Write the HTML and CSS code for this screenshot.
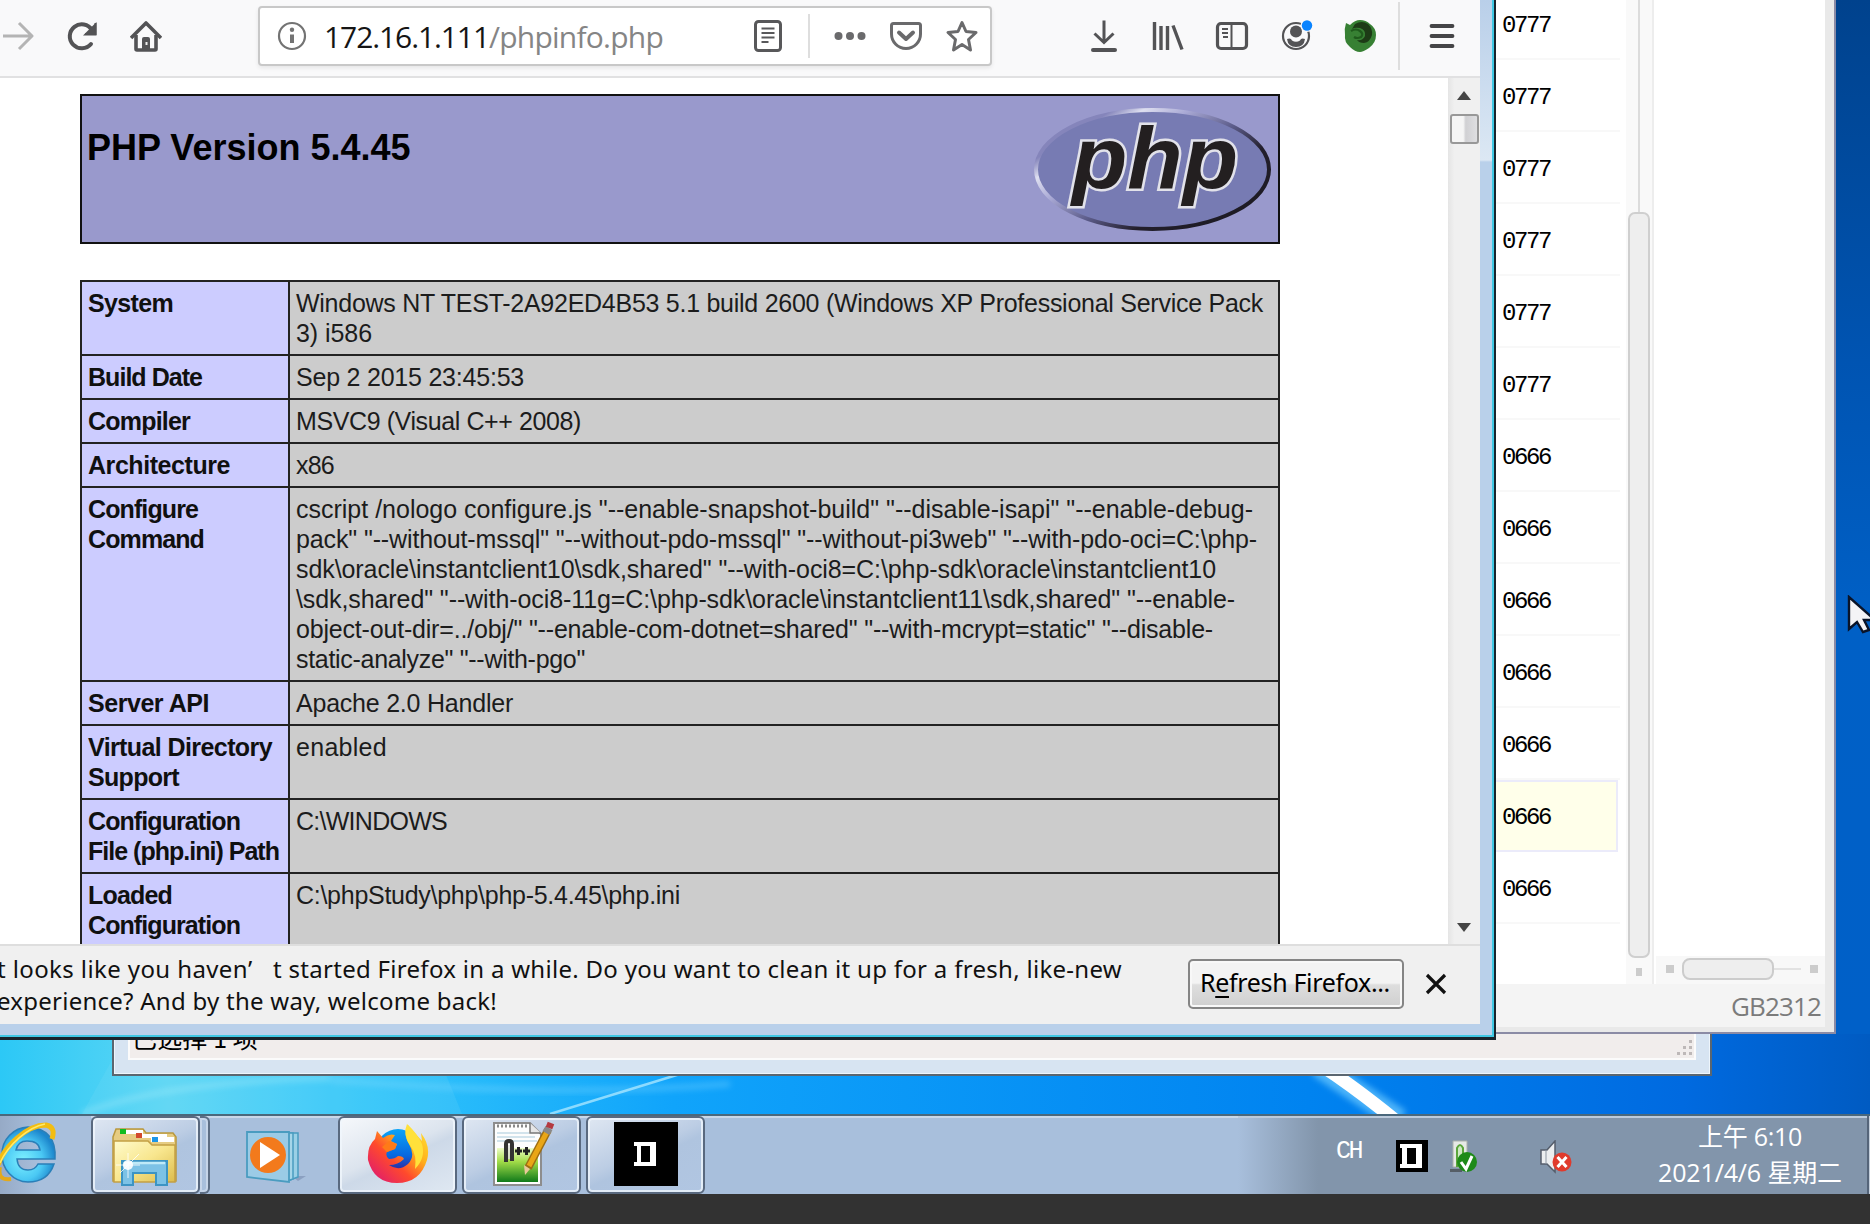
FILE: index.html
```html
<!DOCTYPE html>
<html lang="en">
<head>
<meta charset="utf-8">
<title>phpinfo()</title>
<link rel="stylesheet" href="styles.css">
</head>
<body>
<div class="desktop">
  <svg class="wallpaper" viewBox="0 0 1870 1114" preserveAspectRatio="none">
    <defs>
      <linearGradient id="sky" x1="0" x2="1" y1="0" y2="0"><stop offset="0" stop-color="#2cc8f6"/><stop offset=".09" stop-color="#5cd6f4"/><stop offset=".2" stop-color="#30c4fa"/><stop offset=".36" stop-color="#10a4fb"/><stop offset=".7" stop-color="#0083f0"/><stop offset=".9" stop-color="#006ae0"/><stop offset="1" stop-color="#005bc2"/></linearGradient>
      <linearGradient id="side" x1="0" x2="0" y1="0" y2="1"><stop offset="0" stop-color="#00428d"/><stop offset=".35" stop-color="#0054b2"/><stop offset=".6" stop-color="#0060c6"/><stop offset="1" stop-color="#0060c8"/></linearGradient>
      <filter id="soft" x="-20%" y="-50%" width="140%" height="200%"><feGaussianBlur stdDeviation="3"/></filter>
    </defs>
    <rect width="1870" height="1114" fill="url(#sky)"/>
    <rect x="1832" width="38" height="1034" fill="url(#side)"/>
    <path d="M82 1114Q160 1082 330 1078" stroke="#b4f0fa" stroke-width="4" fill="none" opacity=".5" filter="url(#soft)"/>
    <path d="M82 1114L112 1060H440L462 1114Z" fill="#8fe4fa" opacity=".14"/>
    <path d="M330 1080Q560 1098 730 1084" stroke="#8adcff" stroke-width="5" fill="none" opacity=".4" filter="url(#soft)"/>
    <path d="M550 1114L680 1074" stroke="#a8e6ff" stroke-width="2.5" opacity=".8"/>
    <path d="M1318 1066L1400 1120" stroke="#6ecbff" stroke-width="22" filter="url(#soft)" opacity=".7"/>
    <path d="M1322 1066Q1356 1088 1400 1124" stroke="#fff" stroke-width="13" fill="none"/>
  </svg>

  <section class="explorer">
    <div class="explorer-status"><span data-w="126">已选择 1 项</span>
      <svg width="16" height="16" viewBox="0 0 16 16" fill="#bdb8b8"><path d="M12 0h3v3h-3zM6 6h3v3H6zM12 6h3v3h-3zM0 12h3v3H0zM6 12h3v3H6zM12 12h3v3h-3z"/></svg>
    </div>
  </section>

  <section class="manager">
    <div class="manager-body">
      <div class="list">
        <div class="entry">0777</div><div class="entry">0777</div><div class="entry">0777</div><div class="entry">0777</div><div class="entry">0777</div><div class="entry">0777</div>
        <div class="entry">0666</div><div class="entry">0666</div><div class="entry">0666</div><div class="entry">0666</div><div class="entry">0666</div>
        <div class="entry selected">0666</div><div class="entry">0666</div>
      </div>
      <div class="vscroll"><div class="vline"></div><div class="vthumb"></div><i class="nub"></i></div>
      <div class="pane">
        <div class="hscroll"><i class="nub"></i><div class="hthumb"></div><div class="hline"></div><i class="nub"></i></div>
      </div>
    </div>
    <div class="manager-status"><span data-w="90">GB2312</span></div>
  </section>

  <section class="firefox">
    <div class="client">
      <nav class="toolbar">
        <span class="tool"><svg width="32" height="32" viewBox="0 0 32 32" fill="none" stroke="#b4b4b4" stroke-width="3"><path d="M1 16h29M17 3l13 13-13 13" stroke-linejoin="round"/></svg></span>
        <span class="tool"><svg width="32" height="32" viewBox="0 0 32 32" fill="none" stroke="#535355" stroke-width="4"><path d="M25 24A12 12 0 1 1 26 10" stroke-linecap="round"/><path d="M30.500 2v13.500H17z" fill="#535355" stroke="none"/><path d="M19 14h10.500V3" stroke-width="2"/></svg></span>
        <span class="tool"><svg width="32" height="32" viewBox="0 0 32 32" fill="none" stroke="#535355" stroke-width="3.600"><path d="M1 18L16 3l15 15" stroke-linejoin="round"/><path d="M6 15v14a1 1 0 0 0 1 1h18a1 1 0 0 0 1-1V15"/><path d="M12 30V19q0-2 2-2h4q2 0 2 2v11z" fill="#535355" stroke="none"/><path d="M16.500 22v3" stroke="#eee" stroke-width="2"/></svg></span>
        <div class="urlbar">
          <svg class="info" width="30" height="30" viewBox="0 0 30 30" fill="none" stroke="#737373"><circle cx="15" cy="15" r="13" stroke-width="2.200"/><path d="M15 13.500V22" stroke-width="4"/><circle cx="15" cy="8.800" r="2.200" fill="#737373" stroke="none"/></svg>
          <span class="url"><span class="host" data-w="165">172.16.1.111</span><span class="path" data-w="174">/phpinfo.php</span></span>
          <svg class="reader" width="32" height="34" viewBox="0 0 32 34" fill="none" stroke="#58585a" stroke-width="3"><rect x="3.500" y="2.500" width="25" height="29" rx="3"/><path d="M9.500 9.500h13M9.500 14h13M9.500 18.500h13M9.500 23h7" stroke-width="2"/></svg>
          <i class="rule short"></i>
          <span class="action"><svg width="36" height="32" viewBox="0 0 36 32" fill="#6a6a6c"><circle cx="6.500" cy="16" r="4"/><circle cx="18" cy="16" r="4"/><circle cx="29.500" cy="16" r="4"/></svg></span>
          <span class="action"><svg width="34" height="32" viewBox="0 0 34 32" fill="none" stroke="#6a6a6c" stroke-width="3"><path d="M4.500 3.500h25q2 0 2 2V14a14.500 14.500 0 0 1-29 0V5.500q0-2 2-2z"/><path d="M10 12.500l7 6.500 7-6.500" stroke-width="4" stroke-linecap="round" stroke-linejoin="round"/></svg></span>
          <span class="action"><svg width="34" height="34" viewBox="0 0 34 34" fill="none" stroke="#6a6a6c" stroke-width="3" stroke-linejoin="round"><path d="M17 3.500l4 9 10 1-7.500 7L25.500 31 17 25.500 8.500 31l2-10.500L3 13.500l10-1z"/></svg></span>
        </div>
        <span class="tool first"><svg width="32" height="34" viewBox="0 0 32 34" fill="none" stroke="#535355" stroke-width="3"><path d="M16 1.500v22M6.500 14.500l9.500 9 9.500-9"/><path d="M5 31h22" stroke-width="4" stroke-linecap="round"/></svg></span>
        <span class="tool"><svg width="34" height="30" viewBox="0 0 34 30" fill="none" stroke="#535355" stroke-width="3.400"><path d="M3.500 1v28M10 5v24M16.500 5v24M22 4.500l9 24"/></svg></span>
        <span class="tool"><svg width="34" height="30" viewBox="0 0 34 30" fill="none" stroke="#535355" stroke-width="3.200"><rect x="2.500" y="2.500" width="29" height="25" rx="3.500"/><path d="M16.500 3v24" stroke-width="2"/><path d="M7 8h6M7 12h6M8 16h5" stroke-width="1.800"/></svg></span>
        <span class="tool"><svg width="34" height="38" viewBox="0 0 34 38" fill="#535355"><circle cx="17" cy="19" r="13" fill="none" stroke="#535355" stroke-width="2.200"/><circle cx="17" cy="14.500" r="6"/><path d="M8 22q4-1.500 5 1.500q4 2.500 8 0q1-3 5-1.500q-1 8-9 8t-9-8z"/><circle cx="28" cy="8.500" r="6.500" fill="#f9f9fa"/><circle cx="28" cy="8.500" r="5.200" fill="#0a84ff"/></svg></span>
        <span class="tool"><svg width="34" height="34" viewBox="0 0 34 34"><path d="M3 4l4 2q5-5 10-5 6 0 10 4 6 4 6 11 0 8-7 13-6 4-9 4-5 0-10-5-6-5-5-12-1-6 1-12z" fill="#378033"/><path d="M12 5q7-4 13 0 5 5 4 11-2 7-8 8-5 0-7-3 6 1 8-4 1-6-5-8-5-1-8 1z" fill="#1d3b16"/><path d="M8 12q5-3 9 0t1 6q-4 2-7 0" fill="none" stroke="#1f5a1c" stroke-width="2.200"/></svg></span>
        <i class="rule tall"></i>
        <svg class="menu" width="26" height="26" viewBox="0 0 26 26" stroke="#454547" stroke-width="3.800" stroke-linecap="round"><path d="M2.500 3h21M2.500 13h21M2.500 23h21"/></svg>
      </nav>

      <div class="viewport">
        <main class="page">
          <header class="banner">
            <h1>PHP Version 5.4.45</h1>
            <svg width="242" height="130" viewBox="0 0 242 130">
              <defs>
                <linearGradient id="rim" x1="0" y1="0" x2="1" y2=".8"><stop offset=".2" stop-color="#8585bb"/><stop offset=".28" stop-color="#dedff0"/><stop offset=".4" stop-color="#a9a9d5"/><stop offset=".58" stop-color="#5c5c8a"/><stop offset=".75" stop-color="#231f2c"/><stop offset="1" stop-color="#1c1a22"/></linearGradient>
              </defs>
              <ellipse cx="120.500" cy="65.500" rx="116.500" ry="59.500" fill="#777bb3" stroke="url(#rim)" stroke-width="4"/>
              <text x="40" y="84" class="logo" textLength="166" lengthAdjust="spacingAndGlyphs">php</text>
            </svg>
          </header>
          <table class="facts">
            <tr><th><span data-w="85">System</span></th><td><span data-w="967">Windows NT TEST-2A92ED4B53 5.1 build 2600 (Windows XP Professional Service Pack</span><br><span data-w="76">3) i586</span></td></tr>
            <tr><th><span data-w="114">Build Date</span></th><td><span data-w="228">Sep 2 2015 23:45:53</span></td></tr>
            <tr><th><span data-w="102">Compiler</span></th><td><span data-w="285">MSVC9 (Visual C++ 2008)</span></td></tr>
            <tr><th><span data-w="142">Architecture</span></th><td><span data-w="38">x86</span></td></tr>
            <tr><th><span data-w="110">Configure</span><br><span data-w="116">Command</span></th><td><span data-w="957">cscript /nologo configure.js "--enable-snapshot-build" "--disable-isapi" "--enable-debug-</span><br><span data-w="961">pack" "--without-mssql" "--without-pdo-mssql" "--without-pi3web" "--with-pdo-oci=C:\php-</span><br><span data-w="920">sdk\oracle\instantclient10\sdk,shared" "--with-oci8=C:\php-sdk\oracle\instantclient10</span><br><span data-w="939">\sdk,shared" "--with-oci8-11g=C:\php-sdk\oracle\instantclient11\sdk,shared" "--enable-</span><br><span data-w="917">object-out-dir=../obj/" "--enable-com-dotnet=shared" "--with-mcrypt=static" "--disable-</span><br><span data-w="289">static-analyze" "--with-pgo"</span></td></tr>
            <tr><th><span data-w="121">Server API</span></th><td><span data-w="217">Apache 2.0 Handler</span></td></tr>
            <tr><th><span data-w="184">Virtual Directory</span><br><span data-w="91">Support</span></th><td><span data-w="91">enabled</span></td></tr>
            <tr><th><span data-w="152">Configuration</span><br><span data-w="191">File (php.ini) Path</span></th><td><span data-w="151">C:\WINDOWS</span></td></tr>
            <tr><th><span data-w="84">Loaded</span><br><span data-w="152">Configuration</span></th><td><span data-w="384">C:\phpStudy\php\php-5.4.45\php.ini</span></td></tr>
          </table>
        </main>
        <div class="scrollbar">
          <svg width="14" height="9" viewBox="0 0 14 9"><path d="M7 0l7 9H0z" fill="#454545"/></svg>
          <div class="thumb"></div>
          <svg class="down" width="14" height="9" viewBox="0 0 14 9"><path d="M7 9l7-9H0z" fill="#454545"/></svg>
        </div>
      </div>

      <footer class="notice">
        <p><span data-w="251">t looks like you haven</span><span class="apos">’</span><span data-w="849">t started Firefox in a while. Do you want to clean it up for a fresh, like-new</span><br><span data-w="500">experience? And by the way, welcome back!</span></p>
        <button class="refresh"><span data-w="190">R<u>e</u>fresh Firefox...</span></button>
        <svg width="22" height="22" viewBox="0 0 22 22" stroke="#111" stroke-width="3.200"><path d="M2 2l18 18M20 2L2 20"/></svg>
      </footer>
    </div>
  </section>

  <svg class="pointer" width="26" height="42" viewBox="0 0 26 42"><path d="M2 2v32l8-7 6 10 6-2-5-10h11z" fill="#f4f4f6" stroke="#0a1428" stroke-width="2.400"/></svg>
</div>

<footer class="taskbar">
  <div class="ie">
    <svg width="58" height="64" viewBox="0 0 58 64">
      <defs><radialGradient id="ieb" cx=".4" cy=".6" r=".6"><stop offset="0" stop-color="#7df0ff"/><stop offset=".6" stop-color="#4ac8f4"/><stop offset="1" stop-color="#1c86cc"/></radialGradient></defs>
      <path fill-rule="evenodd" d="M28 6A27 27 0 0 0 2 33a27 27 0 0 0 26 28q20 0 26-18H38q-3 6-10 6-10 0-11-11h38Q57 8 28 6zM16 29q2-9 11-9 12 0 13 9z" fill="url(#ieb)" stroke="#2a7fb8" stroke-width="1.500"/>
      <path d="M-2 44C4 26 26 4 46 4q10 2 6 14" fill="none" stroke="#f2bd12" stroke-width="5"/><path d="M0 42C8 24 28 6 45 3" fill="none" stroke="#ffe96a" stroke-width="1.500"/>
      <path d="M0 46q-3 14 11 12" fill="none" stroke="#e3a91a" stroke-width="4"/>
    </svg>
  </div>
  <div class="task folder">
    <svg width="66" height="60" viewBox="0 0 66 60">
      <defs><linearGradient id="fold" x1="0" y1="0" x2="1" y2="1"><stop offset="0" stop-color="#fffbcc"/><stop offset=".5" stop-color="#f8e68e"/><stop offset="1" stop-color="#dcbc4c"/></linearGradient></defs>
      <path d="M2 54V10l3-8h27l3 4h27l3 4v44z" fill="#e6cc82" stroke="#b9983e" stroke-width="1.500"/>
      <path d="M12 3h20v4H12z" fill="#fff"/><rect x="9" y="2" width="6" height="5" fill="#10bc20"/>
      <path d="M28 7h28v4H28z" fill="#fff"/><rect x="25" y="6" width="6" height="5" fill="#d34a2c"/>
      <path d="M3 55V14h34l4 4h23v37z" fill="url(#fold)" stroke="#c3a044" stroke-width="1.500"/>
      <path d="M40 10h23v5H40z" fill="#fff"/><rect x="41" y="10" width="6" height="5" fill="#1c96e8"/>
      <path d="M11 58V34h45v24H45V46H22v12z" fill="#7cc2e6" stroke="#3c94c4" stroke-width="2"/><path d="M13 36h41" stroke="#bfeaf8" stroke-width="2.500"/>
      <circle cx="17" cy="38" r="5" fill="#fff" opacity=".9"/><path d="M17 26v25M5 38h24M9 46l19-19" stroke="#fff" stroke-width="1" opacity=".8"/>
    </svg>
  </div>
  <div class="stack"></div>
  <div class="media">
    <svg width="60" height="54" viewBox="0 0 60 54">
      <path d="M46 46h14l-8 5z" fill="#7f93b5" opacity=".7"/>
      <path d="M14 3h38v44l-8 3z" fill="#9ad0e6" stroke="#4a9cc0" stroke-width="1.500"/><path d="M10 3h37v46l-6 2z" fill="#a5d6e9" stroke="#4a9cc0" stroke-width="1.500"/>
      <path d="M1 2h42v50L1 47z" fill="#9bcbe6" stroke="#4a9cc0" stroke-width="1.800"/>
      <circle cx="22" cy="25" r="18" fill="#f37a1c"/><path d="M14 12l20 13-20 13z" fill="#fff"/>
    </svg>
  </div>
  <div class="task active">
    <svg width="62" height="64" viewBox="0 0 62 64">
      <defs>
        <linearGradient id="fx" x1="1" y1="0" x2="0" y2="1"><stop offset="0" stop-color="#ffe83a"/><stop offset=".35" stop-color="#ffb01a"/><stop offset=".6" stop-color="#ff4a2c"/><stop offset="1" stop-color="#d8107e"/></linearGradient>
        <linearGradient id="globe" x1="0" y1="0" x2="0" y2="1"><stop offset="0" stop-color="#0aa4f8"/><stop offset=".6" stop-color="#0868e0"/><stop offset="1" stop-color="#3a1c90"/></linearGradient>
      </defs>
      <circle cx="31" cy="29" r="22" fill="url(#globe)"/>
      <path d="M10 9l6 7q6-5 12-3l-4 6 6 3-2 5-8 3q-2 4 2 7 6 0 9-3 5 0 6 3-6 6-15 6 10 7 19-1 8-8 1-20-6-10-1-19l4 5 10 11-1-8q10 13 6 27-7 23-30 23T1 38Q0 24 8 17z" fill="url(#fx)"/>
      <path d="M40 2q10 9 15 20 4 14-7 25 2-14-4-22-9-12-4-23z" fill="#ffe13a"/>
      <path d="M22 19l8 3-2 5-8 3-5-5z" fill="#ff7a18"/>
    </svg>
  </div>
  <div class="task npp">
    <svg width="64" height="66" viewBox="0 0 64 66">
      <defs><linearGradient id="grass" x1="0" y1="0" x2="0" y2="1"><stop offset="0" stop-color="#eefcc8"/><stop offset=".4" stop-color="#a2dc48"/><stop offset="1" stop-color="#107a1a"/></linearGradient></defs>
      <path d="M2 2h36l11 11v51H2z" fill="#fdfdfd" stroke="#8d8d8d" stroke-width="2"/>
      <path d="M5 12h32M5 16h38M5 20h40" stroke="#c4dae6" stroke-width="1.500"/><path d="M5 5h32" stroke="#888" stroke-width="3" stroke-dasharray="2 2"/>
      <rect x="5" y="27" width="41" height="34" fill="url(#grass)"/><path d="M38 2v10h11" fill="#e6e6e6" stroke="#777" stroke-width="1.500"/>
      <path d="M14 41V23q0-3 3-3t3 3v17" fill="none" stroke="#333" stroke-width="4"/><path d="M17 38V24" stroke="#ddd" stroke-width="1.500"/>
      <path d="M23 30h7M26.500 26v8M31 30h7M34.500 26v8" stroke="#222" stroke-width="3"/>
      <path d="M56 9L36 47" stroke="#9d6d12" stroke-width="8"/><path d="M56 9L37 45" stroke="#e9a616" stroke-width="5"/><path d="M32 44l6 4-5 6z" fill="#e9c99a"/><path d="M57 7l-3 5" stroke="#888" stroke-width="8"/><path d="M59 2l-2 5" stroke="#b43a40" stroke-width="7"/>
    </svg>
  </div>
  <div class="task dbox">
    <svg width="64" height="64" viewBox="0 0 64 64"><rect width="64" height="64" fill="#000"/><path d="M20 20h22v24H20v-4h3V24h-3zM27 24v16h9V24z" fill="#fff" fill-rule="evenodd"/></svg>
  </div>
  <div class="tray">
    <span class="lang">CH</span>
    <svg class="ticon d" width="32" height="32" viewBox="0 0 32 32"><rect width="32" height="32" fill="#000"/><path d="M4 4h22v24H4v-4h2V8H4zM11 8v16h9V8z" fill="#fff" fill-rule="evenodd"/></svg>
    <svg class="ticon usb" width="28" height="34" viewBox="0 0 28 34"><path d="M3 1h14v26H3z" fill="#e6e9e6" stroke="#aab0aa"/><path d="M7 27V8q3-6 6 0v20" fill="#cfe8c4" stroke="#5ba63c" stroke-width="2"/><path d="M0 29h12v3H0z" fill="#555e66"/><circle cx="17" cy="22" r="10" fill="#1e8a18"/><path d="M11 22l5 7 6-13" fill="none" stroke="#fff" stroke-width="3"/></svg>
    <svg class="ticon vol" width="34" height="34" viewBox="0 0 34 34"><path d="M1 10h6L15 1v31l-8-8H1z" fill="#eceef0" stroke="#555e6c" stroke-width="1.500"/><path d="M6 10v14" stroke="#8d96a2"/><circle cx="22" cy="22" r="9.500" fill="#e03a2c"/><path d="M17.500 17l9 10M26.500 17l-9 10" stroke="#fff" stroke-width="3"/></svg>
    <div class="clock"><span data-w="104">上午 6:10</span><span data-w="184">2021/4/6 星期二</span></div>
    <i class="peek"></i>
  </div>
</footer>
<script src="fit.js"></script>
</body>
</html>
```
FILE: styles.css
```css
* { box-sizing: border-box; }
body { margin: 0; width: 1870px; height: 1224px; overflow: hidden; background: #323232; font-family: "Liberation Sans", Arial, sans-serif; color: #000; }
svg { display: block; flex: none; }
[data-w] { white-space: pre; }
.desktop { position: relative; height: 1114px; overflow: hidden; }
.wallpaper { width: 1870px; height: 1114px; }

/* Explorer window at the back */
.explorer { position: absolute; left: 112px; top: 960px; width: 1600px; height: 116px; padding: 0 14px 14px; background: #d7e4f2; border: 2px solid #5b6670; box-shadow: inset 0 0 0 1px #eef5fb; }
.explorer-status { height: 100%; border: 2px solid #fbfbfb; background: #f1edec; display: flex; justify-content: space-between; align-items: flex-end; padding: 0 1px 2px 2px; font: 25px/32px "Noto Sans CJK SC", sans-serif; }
.explorer-status span { padding-bottom: 3px; }

/* File manager */
.manager { position: absolute; left: 1480px; top: -20px; width: 356px; height: 1054px; padding: 7px 9px 5px 16px; background: #e9e9e9; border-right: 2px solid #8b8ba5; border-bottom: 2px solid #8b8ba5; display: flex; flex-direction: column; }
.manager-body { flex: 1; display: flex; background: #fff; }
.list { width: 124px; padding-top: 1px; margin-right: 6px; overflow: hidden; }
.entry { height: 72px; padding: 3px 0 0 6px; border-bottom: 2px solid #f8f8f8; font: 24px/70px "Liberation Mono", monospace; letter-spacing: -2.400px; }
.selected { width: 122px; background: #ffffea; border: 2px solid #ebebfa; border-left: 0; padding-top: 1px; }
.vscroll { width: 28px; background: #f9f9f9; border-right: 2px solid #ededed; display: flex; flex-direction: column; align-items: center; }
.vline { width: 2px; height: 225px; background: #dcdcdc; }
.vthumb { width: 22px; height: 746px; border: 2px solid #cfcfcf; border-radius: 7px; background: #eee; }
.vscroll .nub { margin-top: 10px; width: 6px; }
.nub { width: 8px; height: 8px; background: #ccc; }
.pane { flex: 1; display: flex; align-items: flex-end; padding-left: 2px; }
.hscroll { height: 28px; width: 100%; background: #f8f8f8; display: flex; align-items: center; padding: 0 6px 2px 10px; }
.hthumb { width: 92px; height: 22px; margin-left: 8px; border: 2px solid #ccc; border-radius: 8px; background: #eee; }
.hline { width: 27px; height: 2px; margin-right: 9px; background: #e2e2e2; }
.manager-status { height: 43px; background: #f4f4f4; text-align: right; padding-right: 4px; font: 26px/44px "Open Sans", "Noto Sans", sans-serif; color: #7b7b7b; }

/* Firefox window */
.firefox { position: absolute; left: -20px; top: -20px; width: 1516px; height: 1060px; padding: 20px 12px 12px 20px; border: solid #18242c; border-width: 0 2px 3px 0; background: linear-gradient(#b9cfe9 20px, #dce8f4 180px, #b9d0ea 182px); box-shadow: inset -2px -2px 0 #3fc8e4; }
.client { height: 1024px; width: 1480px; display: flex; flex-direction: column; background: #fff; }
.toolbar { height: 78px; padding-bottom: 4px; display: flex; align-items: center; background: #f9f9fa; border-bottom: 2px solid #e1e1e2; }
.tool { flex: none; width: 64px; margin-left: -14px; display: flex; justify-content: center; }
.tool + .tool { margin-left: 0; }
.tool.first { margin-left: 80px; }
.urlbar { flex: none; width: 734px; height: 60px; margin-left: 80px; display: flex; align-items: center; background: #fff; border: 2px solid #c8c8c8; border-radius: 4px; box-shadow: 0 2px 4px rgba(0,0,0,.08); }
.info { margin-left: 17px; }
.url { width: 447px; margin-left: 17px; font: 30px/40px "Open Sans", "Noto Sans", sans-serif; white-space: nowrap; padding-top: 2px; }
.host { color: #151515; }
.path { color: #858585; }
.reader { margin: 0 auto 0 -19px; }
.rule { width: 2px; background: #dedede; flex: none; }
.short { height: 44px; margin-right: 12px; }
.tall { height: 68px; margin-left: 6px; }
.action { width: 56px; display: flex; justify-content: center; }
.menu { margin-left: 29px; }

.viewport { height: 866px; display: flex; overflow: hidden; }
.page { flex: none; width: 1448px; padding: 16px 0 0 80px; }
.banner { width: 1200px; height: 150px; border: 2px solid #111; background: #9999cc; display: flex; justify-content: space-between; padding: 8px 4px 0 5px; }
.banner h1 { margin: 22px 0 0; font: bold 36px/44px "Liberation Sans", Arial, sans-serif; }
.logo { font: italic bold 88px "Liberation Sans", Arial, sans-serif; fill: #231f20; stroke: #e2e2ea; stroke-width: 5px; paint-order: stroke; }
.facts { width: 1200px; margin-top: 36px; table-layout: fixed; border-collapse: collapse; font-size: 25px; line-height: 30px; }
.facts th, .facts td { border: 2px solid #222; padding: 6px 5px 6px 6px; vertical-align: top; text-align: left; color: #101010; white-space: nowrap; }
.facts th { width: 208px; background: #ccccff; }
.facts td { background: #ccc; color: #1c1c1c; }
.facts tr:last-child td { height: 104px; }
.scrollbar { width: 32px; background: linear-gradient(90deg, #e5e5e5, #f0f0f0 20%); display: flex; flex-direction: column; align-items: center; padding: 13px 0 12px; }
.thumb { width: 29px; height: 30px; margin-top: 14px; border: 2px solid #989898; border-radius: 3px; background: linear-gradient(90deg, #f5f5f5 45%, #d0d0d3 55%, #dfdfe1); }
.down { margin-top: auto; }

.notice { height: 80px; background: #f0f0f0; border-top: 2px solid #dedede; display: flex; align-items: center; }
.notice p { flex: none; width: 1188px; height: 70px; padding-top: 3px; margin: 0 0 0 -3px; font: 24px/32px "Noto Sans", "Open Sans", sans-serif; white-space: nowrap; color: #111; }
.apos { display: inline-block; width: 25px; }
.refresh { flex: none; width: 216px; height: 50px; margin: 0 0 3px 3px; padding: 0 2px 3px 0; border: 2px solid #858585; border-radius: 5px; background: linear-gradient(#f3f3f3 48%, #dedede 52%, #cfcfcf); box-shadow: inset 0 0 0 2px #f8f8f8; font: 25px/36px "Noto Sans", "Open Sans", sans-serif; color: #000; white-space: nowrap; }
.refresh u { text-underline-offset: 4px; }
.notice > svg { margin: 0 0 2px 21px; }
.pointer { position: absolute; left: 1847px; top: 595px; }

/* Taskbar */
.taskbar { height: 80px; display: flex; align-items: flex-start; background: #a8bfdc; border-top: 2px solid #4a687c; box-shadow: inset 0 2px 0 #c9d8e9; }
.taskbar > div:not(.tray) { flex: none; height: 78px; }
.ie { width: 91px; padding-top: 5px; background: linear-gradient(90deg, #96aac6, #a8bfdc 40px); }
.task { border: 2px solid #59697f; border-radius: 6px; box-shadow: inset 0 0 0 2px rgba(240,246,253,.8); background: linear-gradient(155deg, #dfe7f2, #bccde4 45%, #afc4df 55%, #b1c6e2); display: flex; justify-content: center; padding-top: 4px; }
.folder { width: 109px; padding: 9px 4px 0 0; }
.stack { width: 10px; border: 2px solid #5d6e85; border-left: 0; border-radius: 0 6px 6px 0; box-shadow: inset 0 0 0 2px #c6d5e9; }
.media { width: 128px; padding: 14px 0 0 36px; }
.active { width: 119px; margin-right: 5px; background: linear-gradient(155deg, #f6f8fb, #dce4ee 45%, #cdd9e8 55%, #dfe8f2); }
.npp { width: 119px; margin-right: 5px; }
.npp svg { margin: -1px 0 0 4px; }
.dbox { width: 119px; }
.tray { flex: 1; height: 78px; margin-left: 533px; display: flex; align-items: flex-start; background: linear-gradient(90deg, #a8bfdc, #8295ab 80px); box-shadow: inset 0 2px 0 #bccbdc; color: #fff; }
.lang { margin: 22px 0 0 98px; width: 60px; font: 25px/28px "Liberation Mono", monospace; letter-spacing: -2.500px; }
.ticon { margin-top: 24px; }
.usb { margin-left: 22px; }
.vol { margin-left: 62px; }
.clock { width: 190px; margin: 2px 0 0 81px; display: flex; flex-direction: column; align-items: center; font: 25px/36px "Open Sans", "Noto Sans CJK SC", sans-serif; }
.peek { width: 3px; height: 78px; margin-left: auto; background: #c3cedb; border-left: 2px solid #55657a; }
```
FILE: fit.js
```js
// Tracks each marked line out to its own set width.
document.querySelectorAll('[data-w]').forEach(function (el) {
  var range = document.createRange();
  range.selectNodeContents(el);
  var natural = range.getBoundingClientRect().width;
  var count = el.textContent.length;
  el.style.letterSpacing = (Number(el.dataset.w) - natural) / count + 'px';
});
```
